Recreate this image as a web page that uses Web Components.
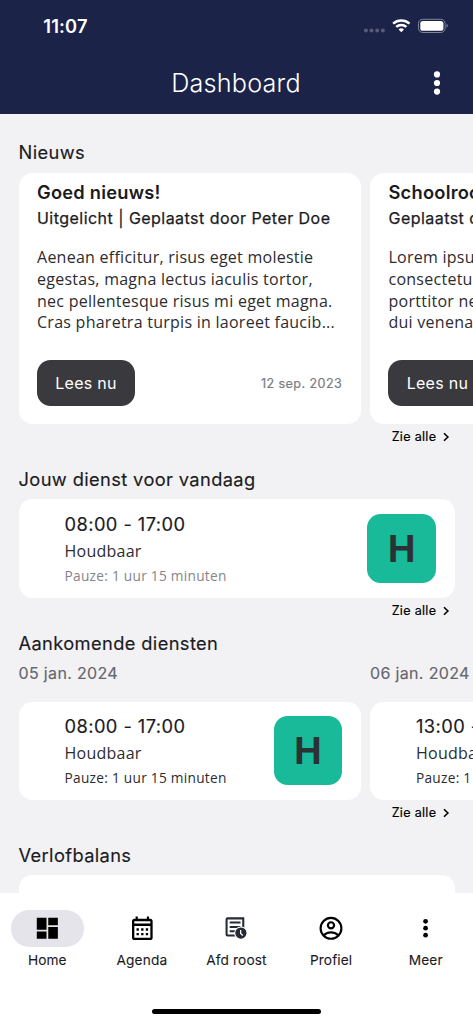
<!DOCTYPE html>
<html lang="nl">
<head>
<meta charset="utf-8">
<title>Dashboard</title>
<style>
html,body{margin:0;height:100%;overflow:hidden;background:#f2f2f5}
body{font-family:Inter,"Liberation Sans",sans-serif;color:#1b1b1f}
</style>
</head>
<body>
<app-screen>
  <app-header slot="top" time="11:07" heading="Dashboard"></app-header>
  <dash-section heading="Nieuws" more style="--pt:24.3px;--head:34.2px;--more:25.2px">
    <news-card author="Uitgelicht | Geplaatst door Peter Doe" date="12 sep. 2023"><span slot="title">Goed nieuws!</span>Aenean efficitur, risus eget molestie<br>egestas, magna lectus iaculis tortor,<br>nec pellentesque risus mi eget magna.<br>Cras pharetra turpis in laoreet faucib...</news-card>
    <news-card author="Geplaatst door Peter Doe" date="11 sep. 2023"><span slot="title">Schoolrooster</span>Lorem ipsum dolor sit amet,<br>consectetur adipiscing elit. Nunc<br>porttitor neque vitae orci, in<br>dui venenatis faucibus...</news-card>
  </dash-section>
  <dash-section heading="Jouw dienst voor vandaag" more style="--pt:17px;--head:33.3px;--more:25.2px">
    <shift-card class="wide" time="08:00 - 17:00" place="Houdbaar" pause="Pauze: 1 uur 15 minuten" muted></shift-card>
  </dash-section>
  <dash-section heading="Aankomende diensten" more style="--pt:7.4px;--head:32.3px;--more:25.2px">
    <shift-day date="05 jan. 2024"><shift-card time="08:00 - 17:00" place="Houdbaar" pause="Pauze: 1 uur 15 minuten"></shift-card></shift-day>
    <shift-day date="06 jan. 2024"><shift-card time="13:00 - 17:00" place="Houdbaar" pause="Pauze: 1 uur 15 minuten"></shift-card></shift-day>
  </dash-section>
  <dash-section heading="Verlofbalans" style="--pt:16.6px;--head:33.7px">
    <balance-card></balance-card>
  </dash-section>
  <tab-bar slot="bottom">
    <tab-item label="Home" icon="home" active></tab-item>
    <tab-item label="Agenda" icon="agenda"></tab-item>
    <tab-item label="Afd roost" icon="roster"></tab-item>
    <tab-item label="Profiel" icon="profile"></tab-item>
    <tab-item label="Meer" icon="more"></tab-item>
  </tab-bar>
</app-screen>
<script>
const define = (name, render) => customElements.define(name, class extends HTMLElement {
  connectedCallback() {
    if (this.shadowRoot) return;
    this.attachShadow({mode: 'open'}).innerHTML = render(this);
  }
});
const attr = (el, n) => el.getAttribute(n) || '';

define('app-screen', () => `<style>
:host{display:flex;flex-direction:column;height:1024px;width:473px;overflow:hidden}
main{flex:1;min-height:0;overflow:hidden}
</style><slot name="top"></slot><main><slot></slot></main><slot name="bottom"></slot>`);

define('app-header', el => `<style>
:host{display:block;height:114.3px;background:#1b2349;color:#fff;flex:none}
.status{display:flex;justify-content:space-between;align-items:center;height:52px;padding:0 24.6px 0 43.3px}
.time{font-size:18.3px;font-weight:600;line-height:22px;letter-spacing:.15px}
.bar{display:grid;grid-template-columns:72px 1fr 72px;align-items:center;height:62px}
h1{margin:0;font-size:25.2px;font-weight:300;text-align:center;line-height:30px;letter-spacing:.2px;padding-right:1px}
svg{display:block}
.menu{justify-self:center}
</style>
<div class="status"><span class="time">${attr(el,'time')}</span>
<svg width="85" height="16" viewBox="0 0 85 16"><g fill="#555b78"><circle cx="2.9" cy="12.6" r="2"/><circle cx="8.5" cy="12.6" r="2"/><circle cx="14.2" cy="12.6" r="2"/><circle cx="19.9" cy="12.6" r="2"/></g>
<g fill="none" stroke="#fff" stroke-width="2.5"><path d="M30.1 5.6a12.2 12.2 0 0 1 16.4 0M33.2 8.9a7.6 7.6 0 0 1 10.2 0"/></g><path fill="#fff" d="M35.6 11.4a4.1 4.1 0 0 1 5.4 0L38.3 14.3z"/>
<rect x="55.5" y="1.3" width="26.6" height="13.2" rx="4.2" fill="none" stroke="#7f849a"/><rect x="57.3" y="3" width="23.1" height="9.8" rx="2.6" fill="#fff"/><path d="M83.5 5.7c1.7.6 1.7 3.7 0 4.3z" fill="#7f849a"/></svg></div>
<div class="bar"><span></span><h1>${attr(el,'heading')}</h1><svg class="menu" width="8" height="24" viewBox="0 0 8 24" fill="#fff"><circle cx="4" cy="3.4" r="3.1"/><circle cx="4" cy="12" r="3.1"/><circle cx="4" cy="20.6" r="3.1"/></svg></div>`);

define('dash-section', el => `<style>
:host{display:block;padding:var(--pt) 0 0 18.5px}
h2{margin:0;height:var(--head);font-size:18.3px;font-weight:400;line-height:26px;letter-spacing:.37px;-webkit-text-stroke:.15px}
.row{display:flex;gap:9.2px;align-items:flex-start}
.more{box-sizing:border-box;display:flex;height:var(--more);justify-content:flex-end;align-items:center;gap:5.5px;padding:1px 23.2px 0 0;font-size:12.57px;font-weight:400;-webkit-text-stroke:.2px;letter-spacing:.3px;color:#000;line-height:16px}
</style><h2>${attr(el,'heading')}</h2><div class="row"><slot></slot></div>${el.hasAttribute('more') ? `<div class="more"><span>Zie alle</span><svg width="8" height="10" viewBox="0 0 8 10" fill="none" stroke="#000" stroke-width="1.6"><path d="M2 1.2 5.9 5 2 8.8"/></svg></div>` : ''}`);

define('news-card', el => `<style>
:host{box-sizing:border-box;display:flex;flex-direction:column;flex:none;width:342.3px;height:251.2px;background:#fff;border-radius:13.7px;padding:6.4px 18.5px 18px;white-space:nowrap}
h3{margin:0;font-size:18.3px;font-weight:600;line-height:26px;letter-spacing:.23px}
.by{font-size:16px;font-weight:400;-webkit-text-stroke:.25px;line-height:25px;letter-spacing:.46px;margin-top:.7px}
p{margin:16.3px 0 0;font-family:"Open Sans","Noto Sans",sans-serif;font-size:16px;line-height:21.7px;letter-spacing:.26px;color:#2c2c30}
.foot{display:flex;justify-content:space-between;align-items:center;margin-top:auto}
button{font:400 16px/22px Inter,sans-serif;letter-spacing:.3px;color:#fff;background:#3a393e;border:0;border-radius:13.7px;width:98px;height:45.7px;padding:0}
.date{font-size:12.57px;font-weight:400;-webkit-text-stroke:.2px;letter-spacing:.44px;color:#7b7a82;padding-top:1px}
</style><h3><slot name="title"></slot></h3><div class="by">${attr(el,'author')}</div><p><slot></slot></p><div class="foot"><button>Lees nu</button><span class="date">${attr(el,'date')}</span></div>`);

define('shift-card', el => `<style>
:host{box-sizing:border-box;display:flex;justify-content:space-between;align-items:center;flex:none;width:342.3px;height:98.1px;background:#fff;border-radius:13.7px;padding:0 18.5px 0 46px;white-space:nowrap}
:host(.wide){width:436px}
.text{padding-top:1.4px}
.time{font-size:18.3px;line-height:26px;letter-spacing:.43px;-webkit-text-stroke:.15px}
.place,.pause{font-family:"Open Sans","Noto Sans",sans-serif;color:#2c2c30}
.place{font-size:16px;line-height:26px;letter-spacing:.25px;margin-top:1px}
.pause{font-size:13.7px;line-height:24px;letter-spacing:.27px}
:host([muted]) .pause{color:#85848c}
</style><div class="text"><div class="time">${attr(el,'time')}</div><div class="place">${attr(el,'place')}</div><div class="pause">${attr(el,'pause')}</div></div><letter-tile>H</letter-tile>`);

define('letter-tile', () => `<style>
:host{box-sizing:border-box;display:flex;align-items:center;justify-content:center;width:68.6px;height:68.6px;padding-top:1.4px;border-radius:13.7px;background:#18ba99;color:#2b3234;font-size:36.6px;font-weight:700;line-height:1}
</style><slot></slot>`);

define('shift-day', el => `<style>
:host{display:block;flex:none}
.date{height:39.3px;line-height:23.6px;font-size:16px;letter-spacing:.34px;color:#66656c;-webkit-text-stroke:.15px}
</style><div class="date">${attr(el,'date')}</div><slot></slot>`);

define('balance-card', () => `<style>:host{display:block;width:436px;height:98px;background:#fff;border-radius:13.7px}</style>`);

define('tab-bar', () => `<style>
:host{box-sizing:border-box;position:relative;display:grid;grid-template-columns:repeat(5,1fr);flex:none;height:131px;background:#fff;padding-top:17px}
i{position:absolute;left:152px;bottom:9.7px;width:169px;height:5.7px;border-radius:3px;background:#000}
</style><slot></slot><i></i>`);

const ICONS = {
  home: '<g transform="translate(12.3 12.3) scale(1.08) translate(-12 -12)"><path d="M3 3h8.3v10.2H3zM12.8 3H21v6.3h-8.2zM12.8 10.8H21V21h-8.2zM3 14.7h8.3V21H3z"/></g>',
  agenda: '<g transform="translate(12.3 12.3) scale(1.07) translate(-12 -12)"><path fill-rule="evenodd" d="M6.2 1.8h1.9v2h7.8v-2h1.9v2h1.1c1.2 0 2 .9 2 2v14.3c0 1.1-.8 2-2 2H5.1c-1.1 0-2-.9-2-2V5.8c0-1.1.9-2 2-2h1.1zM5.1 5.8v2.1h13.8V5.8zM5.1 9.9v10.2h13.8V9.9z"/><path d="M7 12h2v2H7zM11 12h2v2h-2zM15 12h2v2h-2zM7 16h2v2H7zM11 16h2v2h-2zM15 16h2v2h-2z"/></g>',
  roster: '<path d="M4.3 18.9h14.4V3.1H4.3a1 1 0 0 0-1 1v13.8a1 1 0 0 0 1 1zM6.2 6.9h10M6.2 11h10M6.2 15h5" fill="none" stroke="#252a33" stroke-width="1.9"/><circle cx="16.5" cy="16.7" r="6.2" fill="#fff"/><circle cx="16.5" cy="16.7" r="5.2" fill="#252a33"/><path d="M16.3 13.8v3.3l2 1.8" fill="none" stroke="#fff" stroke-width="1.2"/>',
  profile: '<g transform="translate(12 12.3) scale(.95) translate(-12 -12)" fill="none" stroke="#000" stroke-width="2.1"><circle cx="12" cy="12" r="10.1"/><circle cx="12" cy="9.1" r="3"/><path d="M5.2 18.6c3.7-3.6 9.9-3.6 13.6 0"/></g>',
  more: '<circle cx="11.6" cy="5.8" r="2.2"/><circle cx="11.6" cy="12.2" r="2.2"/><circle cx="11.6" cy="18.6" r="2.2"/>'
};
define('tab-item', el => `<style>
:host{display:flex;flex-direction:column;align-items:center;white-space:nowrap}
.pill{display:flex;align-items:center;justify-content:center;width:73px;height:36.6px;border-radius:18.3px}
:host([active]) .pill{background:#e5e4eb}
svg{overflow:visible}
.label{font-size:13.7px;line-height:18px;margin-top:4.8px;letter-spacing:.12px;color:#1b1b1f;-webkit-text-stroke:.1px}
</style><div class="pill"><svg width="26" height="26" viewBox="0 0 24 24">${ICONS[attr(el,'icon')]}</svg></div><div class="label">${attr(el,'label')}</div>`);
</script>
</body>
</html>
